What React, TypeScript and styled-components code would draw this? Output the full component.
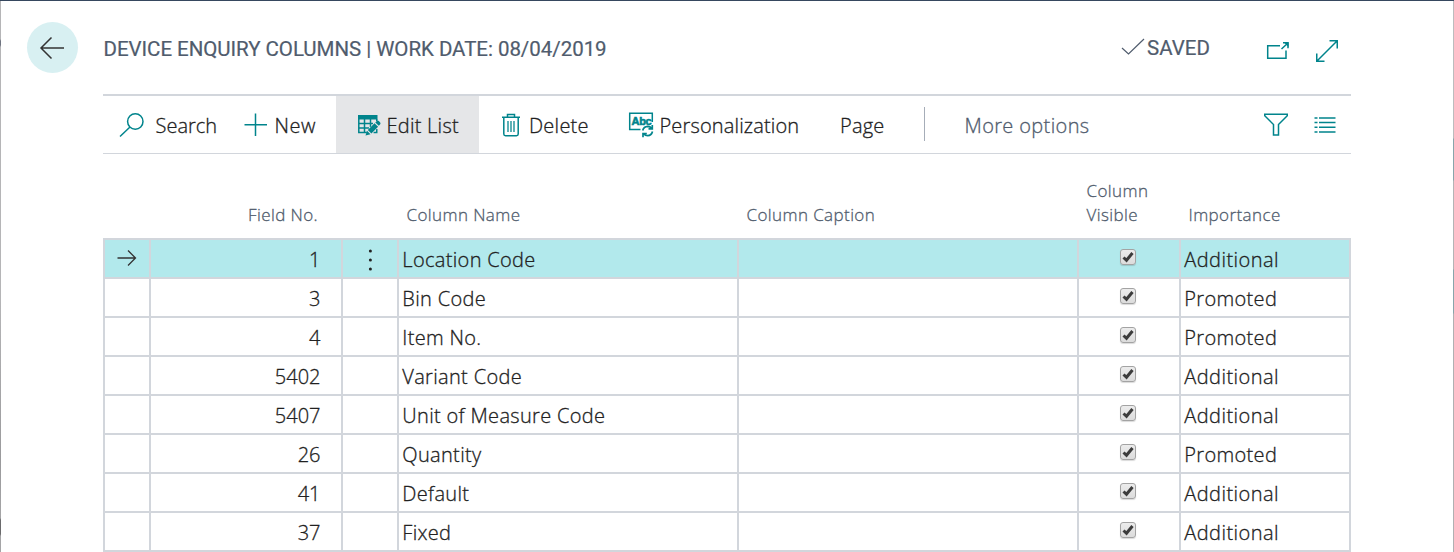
import React from 'react';
import styled, { createGlobalStyle } from 'styled-components';

const teal = '#00848c';
const line = '#d2d6dc';
const slate = '#505c6d';

const Global = createGlobalStyle`
  * { box-sizing: border-box; }
  body { margin: 0; background: #fff; overflow: hidden; }
`;

const Page = styled.div`
  height: 552px;
  overflow: hidden;
  font-family: "Open Sans", "Noto Sans", sans-serif;
  font-weight: 300;
  font-size: 20px;
  -webkit-text-stroke-width: 0.3px;
  color: #212121;
  background:
    linear-gradient(#36475f, #36475f) top / 100% 1px no-repeat,
    linear-gradient(#b5b5b7 0 39px, #6f7480 41px 45px, #b5b5b7 47px 300px, #9a9a9c 460px, #a5a5a7 518px, #6a6a6c 520px 534px, #a5a5a7 536px) left / 1px 100% no-repeat,
    linear-gradient(#bcbcbe 0 138px, #88a5ab 139px 180px, #b4b4b6 181px 269px, #88a5ab 270px 313px, #b0b0b2 314px) right / 1px 100% no-repeat,
    #fff;
`;

const Header = styled.header`
  height: 94px;
  display: flex;
  align-items: center;
  padding: 1px 103px 0 27px;
`;

const BackButton = styled.button`
  width: 51px;
  height: 51px;
  margin-right: 25.5px;
  padding: 0 1px 0 0;
  border: 0;
  border-radius: 50%;
  background: #d8f0f2;
  display: grid;
  place-items: center;
`;

const Title = styled.h1`
  margin: 2px 0 0;
  font: 400 20.5px/28px Roboto, sans-serif;
  letter-spacing: -0.04px;
  -webkit-text-stroke-width: 0.2px;
  color: ${slate};
  white-space: pre;
`;

const Status = styled.div`
  display: flex;
  align-items: center;
  gap: 2px;
  margin-left: auto;
`;

const SavedLabel = styled(Title)`
  margin-top: 0;
  letter-spacing: 0.02px;
`;

const HeaderActions = styled.div`
  display: flex;
  align-items: center;
  gap: 25px;
  margin: 6px 12px 0 55px;
`;

const Content = styled.main`
  width: 1248px;
  margin-left: 103px;
`;

const Toolbar = styled.nav`
  height: 60px;
  display: flex;
  align-items: stretch;
  border-top: 2px solid ${line};
  border-bottom: 1px solid ${line};
`;

const ToolButton = styled.button<{ $width: number; $indent: number; $gap: number; $active?: boolean; $spacing?: number; $muted?: boolean }>`
  width: ${(p) => p.$width}px;
  padding: 0 0 0 ${(p) => p.$indent}px;
  border: 0;
  display: flex;
  align-items: center;
  gap: ${(p) => p.$gap}px;
  font: inherit;
  -webkit-text-stroke-width: 0.3px;
  white-space: nowrap;
  letter-spacing: ${(p) => p.$spacing ?? 0}px;
  color: ${(p) => (p.$muted ? slate : '#212121')};
  background: ${(p) => (p.$active ? '#e5e6e8' : 'transparent')};
`;

const ToolLabel = styled.span`
  padding-top: 2px;
`;

const Divider = styled.span`
  width: 1px;
  height: 34px;
  margin: 11px 0 0;
  background: #a6adb8;
`;

const ViewActions = styled.div`
  display: flex;
  align-items: center;
  gap: 25px;
  margin: 1px 15px 0 auto;
`;

const Icon = styled.svg`
  display: block;
  flex: none;
  fill: none;
  stroke: ${teal};
  stroke-width: 1.5;
`;

const HeadRow = styled.div`
  display: grid;
  grid-template-columns: 46px 192px 56px 340px 340px 102px 172px;
  align-items: end;
  height: 84px;
  padding-bottom: 11px;
  font-size: 17px;
  line-height: 24px;
  letter-spacing: 0.4px;
  color: ${slate};
`;

const HeadCell = styled.div<{ $right?: boolean }>`
  padding: 0 23px 0 9.5px;
  text-align: ${(p) => (p.$right ? 'right' : 'left')};
`;

const Body = styled.div`
  border-bottom: 2px solid ${line};
  border-right: 2px solid ${line};
`;

const Row = styled.div<{ $selected: boolean }>`
  display: grid;
  grid-template-columns: 46px 192px 56px 340px 340px 102px 170px;
  height: 39px;
  border-top: 2px solid ${line};
  background: ${(p) => (p.$selected ? '#b2e9ec' : '#fff')};
`;

const Cell = styled.div<{ $align?: 'center' | 'right'; $wide?: boolean }>`
  display: flex;
  align-items: center;
  justify-content: ${(p) => (p.$align === 'center' ? 'center' : p.$align === 'right' ? 'flex-end' : 'flex-start')};
  padding: ${(p) => (p.$align === 'center' ? '0' : p.$align === 'right' ? '2px 20.5px 0 0' : '2px 0 0 3.3px')};
  border-left: 2px solid ${line};
  letter-spacing: ${(p) => (p.$align === 'right' ? 0 : p.$wide ? 0.45 : 0.33)}px;
  white-space: nowrap;
`;

const CheckBox = styled.span`
  width: 16px;
  height: 16px;
  margin: 0 2px 3px 0;
  display: grid;
  place-items: center;
  border: 1px solid #a3a3a3;
  border-radius: 3px;
  background: linear-gradient(#ececec, #dcdcdc);
  box-shadow: 0 1px 1px rgba(0, 0, 0, 0.15);
`;

const rows: [number, string, string][] = [
  [1, 'Location Code', 'Additional'],
  [3, 'Bin Code', 'Promoted'],
  [4, 'Item No.', 'Promoted'],
  [5402, 'Variant Code', 'Additional'],
  [5407, 'Unit of Measure Code', 'Additional'],
  [26, 'Quantity', 'Promoted'],
  [41, 'Default', 'Additional'],
  [37, 'Fixed', 'Additional'],
];

const BackIcon = () => (
  <Icon width="26" height="24" viewBox="0 0 26 24">
    <path d="M25 12H2M12.500 1.500 2 12l10.500 10.500" stroke="#333" />
  </Icon>
);

const CheckIcon = () => (
  <Icon width="24" height="20" viewBox="0 0 24 20">
    <path d="M1 10 7.500 16 23 1" stroke="#505c6d" strokeWidth="1.200" />
  </Icon>
);

const PopOutIcon = () => (
  <Icon width="25" height="20" viewBox="0 0 25 20">
    <path d="M15 4.700H2.700V17.200H21V9.500" />
    <path d="M16.500 8 23 2M18 1.700h5v5.500" />
    <path d="M19 1.500h4.500v4.500z" fill={teal} stroke="none" />
  </Icon>
);

const ExpandIcon = () => (
  <Icon width="24" height="24" viewBox="0 0 24 24">
    <path d="M2 22 22 2M14.500 1.750h7.750V9.500M1.750 14.500v7.750H9.500" />
  </Icon>
);

const SearchIcon = () => (
  <Icon width="26" height="26" viewBox="0 0 26 26">
    <circle cx="16.300" cy="9.500" r="7.700" />
    <path d="M11 15 1 24.500" />
  </Icon>
);

const PlusIcon = () => (
  <Icon width="24" height="24" viewBox="0 0 24 24">
    <path d="M11.500 .500v22.500M.500 11.700h22.500" />
  </Icon>
);

const EditListIcon = () => (
  <Icon width="24" height="24" viewBox="0 0 24 24">
    <path d="M1 2h19.500v4.500H1z" fill={teal} stroke="none" />
    <path d="M1.800 6v13.500H11M7.500 6v13.500M13.500 6v8M19.750 6v2M1.800 10.500H16M1.800 15H12M16.500 19.500h3.250V16" />
    <path d="M9 22.500 10.500 17 19 8.500l4 4-8.500 8.500z" fill="#e5e6e8" stroke="none" />
    <path d="M8.500 22.500 10 17.800l3.500 3.500zM10.800 17l6.700-6.800 3.600 3.600-6.700 6.700zM18.300 9.400l1.500-1.500q1-.7 2 .2l1.200 1.200q1 1 .2 2l-1.400 1.500z" fill={teal} stroke="none" />
  </Icon>
);

const TrashIcon = () => (
  <Icon width="20" height="24" viewBox="0 0 20 24">
    <path d="M1 4.200h18M6.500 4V1.500h7V4M2.800 4.500V21q0 1.700 1.700 1.700h11q1.700 0 1.700-1.700V4.500" />
    <path d="M7 8v11M10 8v11M13 8v11" strokeWidth="1.700" opacity="0.75" />
  </Icon>
);

const AbcText = styled.text`
  font: 700 11px "Liberation Sans", sans-serif;
  letter-spacing: -0.3px;
  fill: ${teal};
  stroke: ${teal};
  stroke-width: 0.6px;
`;

const PersonalizeIcon = () => (
  <Icon width="26" height="26" viewBox="0 0 26 26">
    <path d="M12.500 17.500H1.700V1.200h22.600V10" />
    <AbcText x="3.500" y="13.300">Abc</AbcText>
    <path d="M14.700 18.500q1-4 5-4.200 2.500 0 4 2M24.300 13v3.800h-3.800M24.500 19.500q-1 4-4.800 4.200-2.500 0-4-2M15 25.300v-3.800h3.800" strokeWidth="1.700" />
  </Icon>
);

const FilterIcon = () => (
  <Icon width="26" height="24" viewBox="0 0 26 24">
    <path d="M1.750 1.250h22.500v1.500L15.500 11.500v10.500h-5V11.500L1.750 2.750z" />
  </Icon>
);

const ListIcon = () => (
  <Icon width="22" height="18" viewBox="0 0 22 18">
    <path d="M.500 2h3M5 2h16.500M.500 6.600h3M5 6.600h16.500M.500 11.300h3M5 11.300h16.500M.500 16h3M5 16h16.500" />
  </Icon>
);

const RowArrowIcon = () => (
  <Icon width="20" height="20" viewBox="0 0 20 20">
    <path d="M.500 9h18M11 1.500 18.500 9 11 16.500" stroke="#333" strokeWidth="1.300" />
  </Icon>
);

const DotsIcon = () => (
  <Icon width="4" height="24" viewBox="0 0 4 24">
    <g fill="#212121" stroke="none">
      <circle cx="2.400" cy="4" r="1.500" />
      <circle cx="2.400" cy="13" r="1.500" />
      <circle cx="2.400" cy="22" r="1.500" />
    </g>
  </Icon>
);

const TickIcon = () => (
  <Icon width="14" height="14" viewBox="0 0 14 14">
    <path d="M2.500 7.500 5.500 10.300 11.500 3" stroke="#3c3c3c" strokeWidth="3" />
  </Icon>
);

export default function App() {
  return (
    <Page>
      <Global />
      <Header>
        <BackButton aria-label="Back"><BackIcon /></BackButton>
        <Title>DEVICE ENQUIRY COLUMNS | WORK DATE: 08/04/2019</Title>
        <Status>
          <CheckIcon />
          <SavedLabel as="span">SAVED</SavedLabel>
        </Status>
        <HeaderActions>
          <PopOutIcon />
          <ExpandIcon />
        </HeaderActions>
      </Header>
      <Content>
        <Toolbar>
          <ToolButton $width={129} $indent={16} $gap={10.5}><SearchIcon /><ToolLabel>Search</ToolLabel></ToolButton>
          <ToolButton $width={104} $indent={12} $gap={6.5} $spacing={0.5}><PlusIcon /><ToolLabel>New</ToolLabel></ToolButton>
          <ToolButton $width={143} $indent={21} $gap={5.5} $spacing={0.25} $active><EditListIcon /><ToolLabel>Edit List</ToolLabel></ToolButton>
          <ToolButton $width={130} $indent={22} $gap={8} $spacing={0.25}><TrashIcon /><ToolLabel>Delete</ToolLabel></ToolButton>
          <ToolButton $width={210} $indent={19} $gap={5.5} $spacing={0.15}><PersonalizeIcon /><ToolLabel>Personalization</ToolLabel></ToolButton>
          <ToolButton $width={105} $indent={21} $gap={0} $spacing={0.2}><ToolLabel>Page</ToolLabel></ToolButton>
          <Divider />
          <ToolButton $width={200} $indent={39.5} $gap={0} $spacing={0.36} $muted><ToolLabel>More options</ToolLabel></ToolButton>
          <ViewActions>
            <FilterIcon />
            <ListIcon />
          </ViewActions>
        </Toolbar>
        <HeadRow>
          <HeadCell />
          <HeadCell $right>Field No.</HeadCell>
          <HeadCell />
          <HeadCell>Column Name</HeadCell>
          <HeadCell>Column Caption</HeadCell>
          <HeadCell>Column Visible</HeadCell>
          <HeadCell>Importance</HeadCell>
        </HeadRow>
        <Body>
          {rows.map(([no, name, importance], i) => (
            <Row key={no} $selected={i === 0}>
              <Cell $align="center">{i === 0 && <RowArrowIcon />}</Cell>
              <Cell $align="right">{no}</Cell>
              <Cell $align="center">{i === 0 && <DotsIcon />}</Cell>
              <Cell>{name}</Cell>
              <Cell />
              <Cell $align="center"><CheckBox><TickIcon /></CheckBox></Cell>
              <Cell $wide={importance === 'Additional'}>{importance}</Cell>
            </Row>
          ))}
        </Body>
      </Content>
    </Page>
  );
}
